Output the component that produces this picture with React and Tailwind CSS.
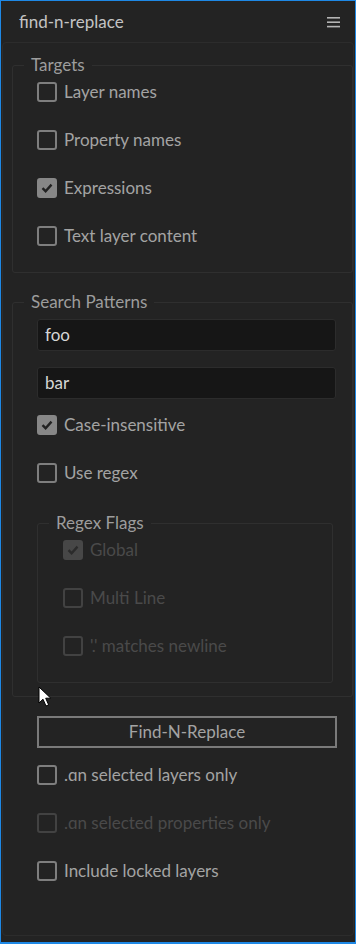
import React from 'react';

const Box = ({ checked, disabled }) => {
  const cls = disabled
    ? checked
      ? 'bg-[#474747] border-[#474747]'
      : 'border-[#424242]'
    : checked
      ? 'bg-[#878787] border-[#878787]'
      : 'border-[#7e7e7e]';
  return (
    <span className={`w-5 h-5 shrink-0 rounded-[3px] border-2 flex items-center justify-center ${cls}`}>
      {checked && (
        <svg width="14" height="14" viewBox="0 0 14 14">
          <path
            d="M2.5 7.2 L5.6 10.2 L11.5 3.6"
            fill="none"
            stroke={disabled ? '#2b2b2b' : '#222222'}
            strokeWidth="2.4"
          />
        </svg>
      )}
    </span>
  );
};

const Check = ({ label, checked, disabled }) => (
  <div className="flex items-center gap-[7px] h-5">
    <Box checked={checked} disabled={disabled} />
    <span className={disabled ? 'text-[#4a4a4a]' : 'text-[#a3a3a3]'}>{label}</span>
  </div>
);

const Group = ({ title, className, children }) => (
  <fieldset className={`border border-[#2f2f2f] rounded-[3px] ${className}`}>
    <legend className="ml-[11px] px-[7px] leading-5 text-[#9d9d9d]">{title}</legend>
    {children}
  </fieldset>
);

const Input = ({ value }) => (
  <div className="h-8 rounded-[3px] border border-[#2c2c2c] bg-[#161616] px-[7px] flex items-center text-[#d6d6d6]">
    {value}
  </div>
);

export default function App() {
  return (
    <div
      className="w-[356px] h-[944px] bg-[#232323] border border-b-2 border-[#1e88e5] flex flex-col text-[17px] relative"
      style={{ fontFamily: 'Lato, "Open Sans", sans-serif' }}
    >
      <div className="h-[41px] shrink-0 flex items-center justify-between pl-[18px] pr-[15px]">
        <span className="text-[#c3c3c3]">find-n-replace</span>
        <svg width="13" height="12" viewBox="0 0 13 12">
          <rect x="0" y="1" width="13" height="1.6" fill="#b4b4b4" />
          <rect x="0" y="5.4" width="13" height="1.6" fill="#b4b4b4" />
          <rect x="0" y="9.8" width="13" height="1.6" fill="#b4b4b4" />
        </svg>
      </div>

      <div className="flex-1 mx-px mb-[6px] border border-[#2c2c2c] rounded-[4px] pt-[12px] pl-[9px]">
        <Group title="Targets">
          <div className="flex flex-col gap-7 mt-[7px] pl-6 pb-[26px]">
            <Check label="Layer names" />
            <Check label="Property names" />
            <Check label="Expressions" checked />
            <Check label="Text layer content" />
          </div>
        </Group>

        <Group title="Search Patterns" className="mt-[19px]">
          <div className="pl-6 pr-4 pb-[13px]">
            <div className="flex flex-col gap-4 mt-[7px]">
              <Input value="foo" />
              <Input value="bar" />
              <Check label="Case-insensitive" checked />
            </div>
            <div className="mt-7">
              <Check label="Use regex" />
            </div>
            <Group title="Regex Flags" className="mt-[30px] mr-[3px] border-[#2c2c2c]">
              <div className="flex flex-col gap-7 mt-[7px] pl-[25px] pb-[26px]">
                <Check label="Global" checked disabled />
                <Check label="Multi Line" disabled />
                <Check label="'.' matches newline" disabled />
              </div>
            </Group>
          </div>
        </Group>

        <div className="ml-[25px] mr-4 mt-[19px]">
          <button className="w-full h-8 border-2 border-[#7a7a7a] text-[#a3a3a3]">Find-N-Replace</button>
          <div className="flex flex-col gap-7 mt-[17px]">
            <Check label=".ɑn selected layers only" />
            <Check label=".ɑn selected properties only" disabled />
            <Check label="Include locked layers" />
          </div>
        </div>
      </div>

      <svg className="absolute left-[37px] top-[685px]" width="14" height="22" viewBox="0 0 14 22">
        <path d="M1 1 L1 17 L5 13.2 L8 20 L10.6 18.8 L7.7 12.2 L12.8 12.2 Z" fill="#ffffff" stroke="#000000" strokeWidth="1" />
      </svg>
    </div>
  );
}
